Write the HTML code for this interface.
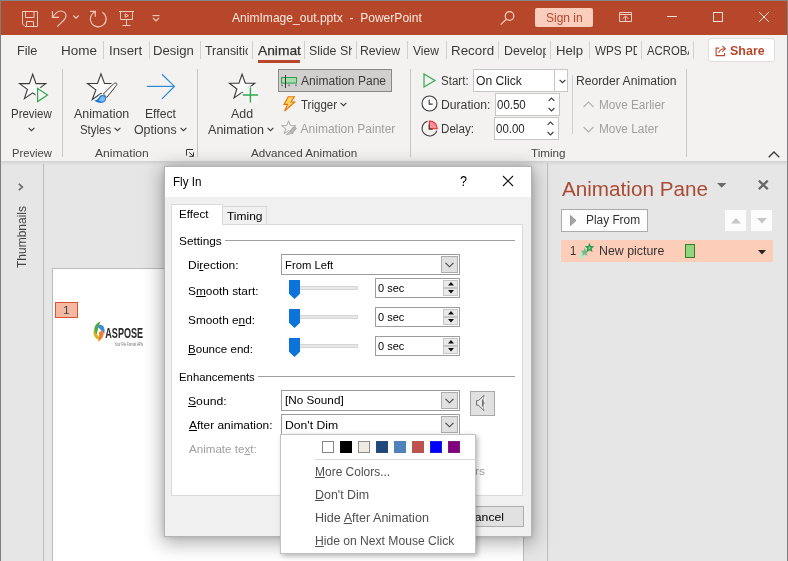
<!DOCTYPE html>
<html><head><meta charset="utf-8">
<style>
*{box-sizing:border-box;margin:0;padding:0}
html,body{width:788px;height:561px;overflow:hidden;background:#e6e6e6;font-family:"Liberation Sans",sans-serif;font-size:12px;color:#333}
.a{position:absolute}
.layer{position:absolute;left:0;top:0;width:788px;height:561px;overflow:hidden}
.tx{position:absolute;white-space:pre;transform-origin:0 0;line-height:normal}
.tx u{text-decoration:underline;text-underline-offset:1px}
svg{position:absolute;overflow:visible}
#title{left:0;top:0;width:788px;height:35px;background:#b7472a}
#tabs{left:0;top:35px;width:788px;height:30px;background:#f3f2f1}
#ribbon{left:0;top:65px;width:788px;height:96px;background:#f3f2f1}
.sep{position:absolute;width:1px;background:#d2d0ce}
.vsep{position:absolute;width:1px;background:#c8c6c4}
.clip{position:absolute;overflow:hidden;height:20px}
.clip .tx{left:0;top:0}
</style></head><body>
<!-- ================= BASE ================= -->
<div class="layer" id="base" style="will-change:transform">
 <div class="a" id="title"></div>
 <div class="a" id="tabs"></div>
 <div class="a" id="ribbon"></div>

 <!-- title icons -->
 <svg style="left:22px;top:11px" width="16" height="16" viewBox="0 0 16 16" fill="none" stroke="#f6cdbf" stroke-width="1">
  <path d="M0.5 0.5 H15.5 V15.5 H3 L0.5 13 Z"/><path d="M3.5 0.5 V6.5 H12 V0.5"/><path d="M4.5 15.5 V10.5 H11.5 V15.5"/>
 </svg>
 <svg style="left:51px;top:10px" width="17" height="18" viewBox="0 0 17 18" fill="none" stroke="#f6cdbf" stroke-width="1.1">
  <path d="M1.4 1 V7.4 H8"/><path d="M1.6 7.2 C4 3.5 6.5 1 9.8 1 C12.8 1 15 3.2 15 5.8 C15 7.5 14.2 8.8 13 10 L6.2 16.6"/>
 </svg>
 <svg style="left:73px;top:15px" width="6" height="4" viewBox="0 0 6 4" fill="none" stroke="#f6cdbf" stroke-width="1.1"><path d="M0.3 0.5 L3 3.2 L5.7 0.5"/></svg>
 <svg style="left:89px;top:10px" width="18" height="18" viewBox="0 0 18 18" fill="none" stroke="#f6cdbf" stroke-width="1.1">
  <path d="M13.4 2.3 A7.9 7.9 0 1 1 6.2 1.7"/><path d="M1 1.4 H6.3 V6.7"/>
 </svg>
 <svg style="left:119px;top:11px" width="15" height="16" viewBox="0 0 15 16" fill="none" stroke="#f6cdbf" stroke-width="1">
  <path d="M0 0.5 H15"/><path d="M1.5 0.5 V8.5 H13.5 V0.5"/><path d="M7.5 8.5 V14.5"/><path d="M3.5 14.5 H11.5"/><path d="M6.2 2.8 L9.4 4.6 L6.2 6.4 Z"/>
 </svg>
 <svg style="left:152px;top:15px" width="8" height="7" viewBox="0 0 8 7" fill="none" stroke="#f6cdbf" stroke-width="1.1"><path d="M0.5 0.6 H7.5"/><path d="M1 3 L4 6 L7 3"/></svg>
 <svg style="left:500px;top:11px" width="15" height="14" viewBox="0 0 15 14" fill="none" stroke="#f6cdbf" stroke-width="1.2">
  <circle cx="9.5" cy="5" r="4.3"/><path d="M6.3 8.3 L0.7 13.6"/>
 </svg>
 <div class="a" style="left:535px;top:8px;width:58px;height:19px;background:#fbcdbd;border-radius:2px"></div>
 <svg style="left:619px;top:12px" width="13" height="10" viewBox="0 0 13 10" fill="none" stroke="#f6cdbf" stroke-width="1">
  <path d="M0.5 0.5 H12.5 V9.5 H0.5 Z"/><path d="M0.5 2.5 H12.5"/><path d="M6.5 9.5 V4.2"/><path d="M3.6 6.8 L6.5 4 L9.4 6.8"/>
 </svg>
 <div class="a" style="left:667px;top:16px;width:10px;height:1px;background:#f9dcd2"></div>
 <div class="a" style="left:713px;top:12px;width:10px;height:10px;border:1px solid #f9dcd2"></div>
 <svg style="left:759px;top:12px" width="10" height="10" viewBox="0 0 10 10" fill="none" stroke="#f9dcd2" stroke-width="1"><path d="M0 0 L10 10 M10 0 L0 10"/></svg>

 <!-- tabs -->
 <div class="sep" style="left:103px;top:41px;height:18px"></div>
 <div class="sep" style="left:149px;top:41px;height:18px"></div>
 <div class="sep" style="left:200px;top:41px;height:18px"></div>
 <div class="sep" style="left:252px;top:41px;height:18px"></div>
 <div class="sep" style="left:304px;top:41px;height:18px"></div>
 <div class="sep" style="left:356px;top:41px;height:18px"></div>
 <div class="sep" style="left:407px;top:41px;height:18px"></div>
 <div class="sep" style="left:446px;top:41px;height:18px"></div>
 <div class="sep" style="left:498px;top:41px;height:18px"></div>
 <div class="sep" style="left:550px;top:41px;height:18px"></div>
 <div class="sep" style="left:589px;top:41px;height:18px"></div>
 <div class="sep" style="left:641px;top:41px;height:18px"></div>
 <div class="sep" style="left:693px;top:41px;height:18px"></div>
 <div class="clip" style="left:205.4px;top:43px;width:42.4px"><span class="tx" style="font-size:13px;color:#3b3a39;transform:scaleX(.95)">Transitions</span></div>
 <div class="clip" style="left:257.5px;top:43px;width:43px"><span class="tx" style="font-size:13px;color:#323130;-webkit-text-stroke:0.25px #323130;transform:scaleX(1.06)">Animations</span></div>
 <div class="clip" style="left:309px;top:43px;width:42.6px"><span class="tx" style="font-size:13px;color:#3b3a39;transform:scaleX(.95)">Slide Show</span></div>
 <div class="clip" style="left:503.7px;top:43px;width:42.3px"><span class="tx" style="font-size:13px;color:#3b3a39;transform:scaleX(.95)">Developer</span></div>
 <div class="clip" style="left:594.8px;top:43px;width:42.3px"><span class="tx" style="font-size:13px;color:#3b3a39;transform:scaleX(.90)">WPS PDF</span></div>
 <div class="clip" style="left:646.5px;top:43px;width:42.3px"><span class="tx" style="font-size:13px;color:#3b3a39;transform:scaleX(.872)">ACROBAT</span></div>
 <div class="a" style="left:258px;top:60px;width:42px;height:3px;background:#b7472a"></div>
 <div class="a" style="left:708px;top:38px;width:67px;height:24px;background:#fff;border:1px solid #e1dfdd;border-radius:3px"></div>
 <svg style="left:715px;top:44.5px" width="12" height="11.5" viewBox="0 0 13 13" fill="none" stroke="#b7472a" stroke-width="1.25">
  <path d="M4.5 3.5 H1 V12 H10.5 V9"/><path d="M3.8 9 C4.5 5.8 6.5 4.2 10.5 4.2"/><path d="M8 1 L11.5 4.2 L8 7.4"/>
 </svg>

 <!-- ribbon -->
 <div class="vsep" style="left:62px;top:69px;height:88px"></div>
 <div class="vsep" style="left:197px;top:69px;height:88px"></div>
 <div class="vsep" style="left:410px;top:69px;height:88px"></div>
 <div class="vsep" style="left:572px;top:75px;height:59px;background:#d2d0ce"></div>
 <div class="vsep" style="left:686px;top:69px;height:88px"></div>
 <!-- Preview star -->
 <svg style="left:17.5px;top:73px" width="32" height="30" viewBox="0 0 32 30" fill="none">
  <path d="M14.7 1.2 L18 10.6 H27.8 L20 16.4 L23 25.6 L14.7 19.8 L6.4 25.6 L9.4 16.4 L1.6 10.6 H11.4 Z" stroke="#3b3a39" stroke-width="1.1" fill="#fafafa"/>
  <path d="M19.6 15.4 L29.6 22 L19.6 28.6 Z" stroke="#f6f5f4" stroke-width="4" fill="#f6f5f4"/><path d="M19.6 15.4 L29.6 22 L19.6 28.6 Z" stroke="#2fa84f" stroke-width="1.2" fill="#f6f5f4"/>
 </svg>
 <svg style="left:28px;top:127px" width="7" height="5" viewBox="0 0 7 5" fill="none" stroke="#3b3a39" stroke-width="1.1"><path d="M0.6 0.8 L3.5 3.7 L6.4 0.8"/></svg>
 <!-- Animation styles star -->
 <svg style="left:86px;top:73px" width="32" height="31" viewBox="0 0 32 31" fill="none">
  <path d="M15 0.9 L18.5 10.5 H28.6 L20.1 16.9 L23.7 26.5 L15 20.4 L6.3 26.5 L9.9 16.9 L1.5 10.5 H11.5 Z" stroke="#3b3a39" stroke-width="1.1" fill="#fafafa"/>
  <path d="M30.6 10.3 C30 9.6 28.6 10 27.6 10.8 L17.6 21.2 L20.6 24.2 L29.6 13.4 C30.6 12.2 31.2 11 30.6 10.3 Z" stroke="#f6f5f4" stroke-width="3.4" fill="#f6f5f4"/>
  <path d="M13 22 L22 19 L25 28 L12 30 Z" fill="#f4f3f2"/>
  <path d="M30.6 10.3 C30 9.6 28.6 10 27.6 10.8 L17.4 21 L20.8 24.4 L29.6 13.4 C30.6 12.2 31.2 11 30.6 10.3 Z" stroke="#3b3a39" stroke-width="1" fill="#fbfbfb"/>
  <path d="M8.3 27.4 C11 27.4 12.4 25.6 13.4 23.8 C14.6 21.8 17.4 21.4 19 23 C20.8 24.8 20.4 27.6 18.2 29 C15.4 30.6 11 30 8.3 27.4 Z" fill="#1f7ad6"/>
  <path d="M12.6 27.6 C13.8 26.8 14 25 15 24 C16.2 22.8 18 23 18.8 24.2 C19.6 25.6 19 27.4 17.4 28.2 C15.8 29 14 28.6 12.6 27.6 Z" fill="#7fbaee"/>
 </svg>
 <svg style="left:114px;top:127px" width="7" height="5" viewBox="0 0 7 5" fill="none" stroke="#3b3a39" stroke-width="1.1"><path d="M0.6 0.8 L3.5 3.7 L6.4 0.8"/></svg>
 <!-- Effect options arrow -->
 <svg style="left:146px;top:73px" width="30" height="28" viewBox="0 0 30 28" fill="none" stroke="#2b88d8" stroke-width="1.2">
  <path d="M0.8 13.4 H28.2"/><path d="M16 1.2 L28.4 13.4 L16 25.8"/>
 </svg>
 <svg style="left:179.5px;top:127px" width="7" height="5" viewBox="0 0 7 5" fill="none" stroke="#3b3a39" stroke-width="1.1"><path d="M0.6 0.8 L3.5 3.7 L6.4 0.8"/></svg>
 <!-- dialog launcher -->
 <svg style="left:186px;top:149px" width="9" height="9" viewBox="0 0 9 9" fill="none" stroke="#3b3a39" stroke-width="1"><path d="M0.5 6.6 V0.5 H7"/><path d="M3.2 3.4 L7.2 7"/><path d="M7.5 3.4 V7.4 H3.4"/></svg>
 <!-- Add animation star -->
 <svg style="left:228px;top:73px" width="32" height="31" viewBox="0 0 32 31" fill="none">
  <path d="M14.1 1.2 L17.3 10.2 H26.8 L19.3 16 L22.2 25 L14.1 19.4 L6 25 L8.9 16 L1.4 10.2 H10.9 Z" stroke="#3b3a39" stroke-width="1.1" fill="#fafafa"/>
  <path d="M22.4 13.4 V30 M13.4 22 H31" stroke="#f6f5f4" stroke-width="4.4"/><rect x="18.6" y="15" width="12" height="15" fill="#f6f5f4"/><path d="M22.4 14.4 V29.6 M14.8 22 H30" stroke="#2fa84f" stroke-width="1.4"/>
 </svg>
 <svg style="left:267px;top:127px" width="7" height="5" viewBox="0 0 7 5" fill="none" stroke="#3b3a39" stroke-width="1.1"><path d="M0.6 0.8 L3.5 3.7 L6.4 0.8"/></svg>
 <!-- animation pane button -->
 <div class="a" style="left:278px;top:69px;width:114px;height:23px;background:#d2d0ce;border:1px solid #8a8886"></div>
 <svg style="left:281px;top:75px" width="17" height="13" viewBox="0 0 17 13" fill="none">
  <rect x="0.5" y="2.5" width="15" height="5.6" fill="#a6dcae" stroke="#2f9e4e" stroke-width="1"/>
  <path d="M4.5 0 V13" stroke="#3b3a39" stroke-width="1"/>
  <path d="M1 9.6 V11.2 M8 9.6 V11.2 M15 9.6 V11.2" stroke="#3b3a39" stroke-width="1"/>
 </svg>
 <!-- trigger bolt -->
 <svg style="left:283px;top:96px" width="13" height="16" viewBox="0 0 13 16" fill="#fcd462" stroke="#e8730c" stroke-width="1.1" stroke-linejoin="miter">
  <path d="M5.2 0.7 H11.4 L8 6 H11.8 L1.6 15.2 L4.4 8.4 H1 Z"/>
 </svg>
 <svg style="left:339.5px;top:102px" width="7" height="5" viewBox="0 0 7 5" fill="none" stroke="#3b3a39" stroke-width="1.1"><path d="M0.6 0.8 L3.5 3.7 L6.4 0.8"/></svg>
 <!-- animation painter (disabled) -->
 <svg style="left:281px;top:120px" width="17" height="16" viewBox="0 0 17 16" fill="none" stroke="#aeaba8" stroke-width="1">
  <path d="M7.6 0.8 L9.4 5.6 H14.8 L10.6 8.8 L12 13.6 L7.6 10.6 L3.2 13.6 L4.8 8.8 L0.6 5.6 H5.8 Z"/>
  <path d="M15.4 8.2 L11.4 13.2 L8.8 11 L13.4 6.6 Z" fill="#b9b6b3" stroke="#a8a5a2"/>
  <path d="M8.8 11.2 L5.6 14.8 L10.6 13.4 Z" fill="#c8c6c4" stroke="#b3b0ad"/>
 </svg>
 <!-- timing -->
 <svg style="left:423px;top:73px" width="13" height="15" viewBox="0 0 13 15" fill="none" stroke="#2fa84f" stroke-width="1.2"><path d="M1 0.9 L12 7.4 L1 13.9 Z"/></svg>
 <div class="a" style="left:473px;top:69px;width:95px;height:23px;background:#fff;border:1px solid #c8c6c4"></div>
 <div class="a" style="left:554px;top:70px;width:1px;height:21px;background:#c8c6c4"></div>
 <svg style="left:558.5px;top:79px" width="7" height="5" viewBox="0 0 7 5" fill="none" stroke="#3b3a39" stroke-width="1.2"><path d="M0.6 0.8 L3.5 3.7 L6.4 0.8"/></svg>
 <svg style="left:421px;top:95.1px" width="17" height="17" viewBox="0 0 17 17" fill="none" stroke="#3b3a39" stroke-width="1.1"><circle cx="8.5" cy="8.5" r="7.5" fill="#fafafa"/><path d="M8.2 4.6 V9.1 H11.7"/></svg>
 <div class="a" style="left:495px;top:93px;width:65px;height:23px;background:#fff;border:1px solid #c8c6c4"></div>
 <svg style="left:547.5px;top:97px" width="7" height="15" viewBox="0 0 7 15" fill="none" stroke="#3b3a39" stroke-width="1.1"><path d="M0.6 3.9 L3.5 1 L6.4 3.9"/><path d="M0.6 11 L3.5 13.9 L6.4 11"/></svg>
 <svg style="left:421px;top:119.5px" width="18" height="17" viewBox="0 0 18 17" fill="none" stroke="#3b3a39" stroke-width="1.1">
  <path d="M8.4 8.8 V1 A7.6 7.6 0 0 1 16.2 8.8 Z" fill="#ff8f99" stroke="#e5262c" stroke-width="1.1"/>
  <path d="M6.6 1.2 A7.5 7.5 0 1 0 15.8 10.6"/><path d="M8.2 4.6 V9.1 H11.7"/>
 </svg>
 <div class="a" style="left:494px;top:117px;width:65px;height:23px;background:#fff;border:1px solid #c8c6c4"></div>
 <svg style="left:546.5px;top:121px" width="7" height="15" viewBox="0 0 7 15" fill="none" stroke="#3b3a39" stroke-width="1.1"><path d="M0.6 3.9 L3.5 1 L6.4 3.9"/><path d="M0.6 11 L3.5 13.9 L6.4 11"/></svg>
 <!-- reorder chevrons -->
 <svg style="left:583px;top:101px" width="11" height="7" viewBox="0 0 11 7" fill="none" stroke="#b3b0ad" stroke-width="1.1"><path d="M0.5 6 L5.5 1 L10.5 6"/></svg>
 <svg style="left:583px;top:125.5px" width="11" height="7" viewBox="0 0 11 7" fill="none" stroke="#b3b0ad" stroke-width="1.1"><path d="M0.5 1 L5.5 6 L10.5 1"/></svg>
 <svg style="left:768px;top:151px" width="12" height="7" viewBox="0 0 12 7" fill="none" stroke="#3b3a39" stroke-width="1.3"><path d="M0.7 6.3 L6 1 L11.3 6.3"/></svg>

 <!-- workspace -->
 <div class="a" style="left:0;top:161px;width:788px;height:5px;background:linear-gradient(#cfcfcf,#dddddd 40%,#e6e6e6)"></div>
 <div class="a" style="left:43px;top:164px;width:1px;height:397px;background:#bdbdbd"></div>
 <svg style="left:18px;top:183px" width="6" height="8" viewBox="0 0 6 8" fill="none" stroke="#666" stroke-width="1.6"><path d="M0.8 0.8 L4.4 4 L0.8 7.2"/></svg>
 <div class="a" style="left:14.5px;top:267.5px;width:62px;height:15px;transform-origin:0 0;transform:rotate(-90deg);font-size:12px;color:#444;white-space:pre;line-height:15px"><span style="display:inline-block;transform-origin:0 0;transform:scaleX(1.0)">Thumbnails</span></div>
 <!-- slide -->
 <div class="a" style="left:52px;top:268px;width:472px;height:300px;background:#fff;border:1px solid #bcbcbc"></div>
 <div class="a" style="left:55px;top:302px;width:23px;height:16px;background:#f4b9a3;border:1px solid #d8532f"></div>
 <!-- aspose logo -->
 <svg style="left:93px;top:321px" width="52" height="27" viewBox="0 0 52 27">
  <path d="M 7.40 0.80 C 3.30 1.80 0.80 6.00 1.40 10.00 C 1.70 11.80 2.40 13.20 3.60 14.00 C 4.40 10.50 5.40 5.50 7.40 0.80 Z" fill="#52a83c"/>
  <path d="M 4.20 5.20 C 6.50 3.00 9.80 3.40 11.00 6.40 C 11.80 8.40 11.80 10.60 11.20 12.80 C 9.20 10.50 7.00 8.00 4.20 5.20 Z" fill="#3b8fd4"/>
  <path d="M 0.40 9.20 C 0.20 13.80 2.00 17.40 5.00 18.60 C 6.20 19.00 7.20 18.60 7.80 17.60 C 5.20 15.40 3.40 12.40 0.40 9.20 Z" fill="#d3b51c"/>
  <path d="M 9.80 9.60 C 11.60 13.00 10.40 17.40 5.00 20.80 C 6.40 17.40 6.40 14.00 5.80 11.60 C 7.20 10.40 8.60 9.90 9.80 9.60 Z" fill="#f17e2c"/>
  <text x="12.3" y="17.4" font-family="Liberation Sans, sans-serif" font-weight="bold" font-size="15.5" fill="#2b2b2b" textLength="37.8" lengthAdjust="spacingAndGlyphs">ASPOSE</text>
  <text x="21.6" y="25.3" font-family="Liberation Sans, sans-serif" font-size="5" fill="#6e6e6e" textLength="28.5" lengthAdjust="spacingAndGlyphs">Your File Format APIs</text>
 </svg>
 <!-- animation pane -->
 <div class="a" style="left:547px;top:163px;width:1px;height:398px;background:#bdbdbd"></div>
 <div class="clip" style="left:561.8px;top:176.6px;width:145.6px;height:30px"><span class="tx" style="font-size:20.5px;color:#ab4a33;transform:scaleX(1.008)">Animation Pane</span></div>
 <svg style="left:716.5px;top:183px" width="10" height="5" viewBox="0 0 10 5"><path d="M0 0 H9.4 L4.7 4.7 Z" fill="#6a6a6a"/></svg>
 <svg style="left:757.7px;top:180.3px" width="10.6" height="9.6" viewBox="0 0 10 9" fill="none" stroke="#686868" stroke-width="2.1"><path d="M0.8 0.6 L9.2 8.6 M9.2 0.6 L0.8 8.6"/></svg>
 <div class="a" style="left:561px;top:209px;width:87px;height:23px;background:#fdfdfd;border:1px solid #ababab"></div>
 <svg style="left:570px;top:215px" width="7" height="11" viewBox="0 0 7 11"><path d="M0.5 0.4 L6 5.5 L0.5 10.6 Z" fill="#a6a6a6" stroke="#8c8c8c" stroke-width=".8"/></svg>
 <div class="a" style="left:725px;top:210px;width:21px;height:21px;background:#fcfcfc"></div>
 <div class="a" style="left:751px;top:210px;width:21px;height:21px;background:#fcfcfc"></div>
 <svg style="left:730.5px;top:217.5px" width="10" height="6" viewBox="0 0 10 6"><path d="M5 0 L10 5.6 H0 Z" fill="#c6c6c6"/></svg>
 <svg style="left:756.5px;top:217.5px" width="10" height="6" viewBox="0 0 10 6"><path d="M0 0 H10 L5 5.6 Z" fill="#c6c6c6"/></svg>
 <div class="a" style="left:561px;top:240px;width:212px;height:22px;background:#fccdb9"></div>
 <svg style="left:576px;top:240px" width="20" height="22" viewBox="0 0 20 22" fill="none">
  <path d="M6.00 11.20 L7.14 14.24 L10.37 14.38 L7.84 16.40 L8.70 19.52 L6.00 17.73 L3.30 19.52 L4.16 16.40 L1.63 14.38 L4.86 14.24 Z" fill="#bfe8cb"/>
  <path d="M8.80 7.60 L9.94 10.64 L13.17 10.78 L10.64 12.80 L11.50 15.92 L8.80 14.13 L6.10 15.92 L6.96 12.80 L4.43 10.78 L7.66 10.64 Z" fill="#6fbb88"/>
  <path d="M13.50 2.90 L14.85 6.04 L18.26 6.35 L15.69 8.61 L16.44 11.95 L13.50 10.20 L10.56 11.95 L11.31 8.61 L8.74 6.35 L12.15 6.04 Z" fill="#1f9a49"/>
  <path d="M13.50 6.30 L14.03 7.37 L15.21 7.54 L14.36 8.38 L14.56 9.56 L13.50 9.00 L12.44 9.56 L12.64 8.38 L11.79 7.54 L12.97 7.37 Z" fill="#7fd09a"/>
 </svg>
 <div class="a" style="left:685px;top:244px;width:10px;height:14px;background:#92d67c;border:1px solid #3d7a2e"></div>
 <svg style="left:757.5px;top:250px" width="8" height="5" viewBox="0 0 8 5"><path d="M0 0 H8 L4 4.4 Z" fill="#222"/></svg>

 <!-- window border -->
 <div class="a" style="left:0;top:0;width:788px;height:1px;background:#7f8a86"></div>
 <div class="a" style="left:0;top:0;width:1px;height:561px;background:#7f7f7f"></div>
 <div class="a" style="left:787px;top:0;width:1px;height:561px;background:#7f7f7f"></div>
<span class="tx" style="left:232.3px;top:10.0px;font-size:13px;color:#fde9e1;font-weight:normal;transform:scaleX(0.9284);">AnimImage_out.pptx  -  PowerPoint</span>
<span class="tx" style="left:545.6px;top:10.0px;font-size:13px;color:#b7472a;font-weight:normal;transform:scaleX(0.9237);">Sign in</span>
<span class="tx" style="left:17.3px;top:43.0px;font-size:13px;color:#3b3a39;font-weight:normal;transform:scaleX(0.9737);">File</span>
<span class="tx" style="left:61.4px;top:43.0px;font-size:13px;color:#3b3a39;font-weight:normal;transform:scaleX(1.0394);">Home</span>
<span class="tx" style="left:109.0px;top:43.0px;font-size:13px;color:#3b3a39;font-weight:normal;transform:scaleX(1.0194);">Insert</span>
<span class="tx" style="left:153.3px;top:43.0px;font-size:13px;color:#3b3a39;font-weight:normal;transform:scaleX(1.0103);">Design</span>
<span class="tx" style="left:360.4px;top:43.0px;font-size:13px;color:#3b3a39;font-weight:normal;transform:scaleX(0.9381);">Review</span>
<span class="tx" style="left:413.4px;top:43.0px;font-size:13px;color:#3b3a39;font-weight:normal;transform:scaleX(0.9286);">View</span>
<span class="tx" style="left:450.6px;top:43.0px;font-size:13px;color:#3b3a39;font-weight:normal;transform:scaleX(1.0275);">Record</span>
<span class="tx" style="left:555.8px;top:43.0px;font-size:13px;color:#3b3a39;font-weight:normal;transform:scaleX(1.0120);">Help</span>
<span class="tx" style="left:730.0px;top:43.0px;font-size:13px;color:#b7472a;font-weight:bold;transform:scaleX(0.9600);">Share</span>
<span class="tx" style="left:10.6px;top:107.0px;font-size:12px;color:#3b3a39;font-weight:normal;transform:scaleX(0.9548);">Preview</span>
<span class="tx" style="left:11.5px;top:147.0px;font-size:11px;color:#484644;font-weight:normal;transform:scaleX(1.0184);">Preview</span>
<span class="tx" style="left:73.5px;top:107.0px;font-size:12px;color:#3b3a39;font-weight:normal;transform:scaleX(1.0358);">Animation</span>
<span class="tx" style="left:80.1px;top:123.0px;font-size:12px;color:#3b3a39;font-weight:normal;transform:scaleX(0.9516);">Styles</span>
<span class="tx" style="left:145.4px;top:107.0px;font-size:12px;color:#3b3a39;font-weight:normal;transform:scaleX(1.0138);">Effect</span>
<span class="tx" style="left:133.6px;top:123.0px;font-size:12px;color:#3b3a39;font-weight:normal;transform:scaleX(1.0300);">Options</span>
<span class="tx" style="left:94.9px;top:147.0px;font-size:11px;color:#484644;font-weight:normal;transform:scaleX(1.1000);">Animation</span>
<span class="tx" style="left:231.3px;top:107.0px;font-size:12px;color:#3b3a39;font-weight:normal;transform:scaleX(1.0333);">Add</span>
<span class="tx" style="left:208.3px;top:123.0px;font-size:12px;color:#3b3a39;font-weight:normal;transform:scaleX(1.0472);">Animation</span>
<span class="tx" style="left:300.6px;top:74.0px;font-size:12px;color:#3b3a39;font-weight:normal;transform:scaleX(1.0036);">Animation Pane</span>
<span class="tx" style="left:300.6px;top:98.0px;font-size:12px;color:#3b3a39;font-weight:normal;transform:scaleX(0.9595);">Trigger</span>
<span class="tx" style="left:300.6px;top:122.0px;font-size:12px;color:#a19f9d;font-weight:normal;transform:scaleX(1.0000);">Animation Painter</span>
<span class="tx" style="left:250.8px;top:147.0px;font-size:11px;color:#484644;font-weight:normal;transform:scaleX(1.0580);">Advanced Animation</span>
<span class="tx" style="left:440.5px;top:74.0px;font-size:12px;color:#3b3a39;font-weight:normal;transform:scaleX(0.9630);">Start:</span>
<span class="tx" style="left:475.6px;top:74.0px;font-size:12px;color:#201f1e;font-weight:normal;transform:scaleX(1.0091);">On Click</span>
<span class="tx" style="left:440.5px;top:98.0px;font-size:12px;color:#3b3a39;font-weight:normal;transform:scaleX(1.0149);">Duration:</span>
<span class="tx" style="left:497.3px;top:98.0px;font-size:12px;color:#201f1e;font-weight:normal;transform:scaleX(0.9571);">00.50</span>
<span class="tx" style="left:440.5px;top:122.0px;font-size:12px;color:#3b3a39;font-weight:normal;transform:scaleX(0.9688);">Delay:</span>
<span class="tx" style="left:496.3px;top:122.0px;font-size:12px;color:#201f1e;font-weight:normal;transform:scaleX(0.9571);">00.00</span>
<span class="tx" style="left:531.4px;top:147.0px;font-size:11px;color:#484644;font-weight:normal;transform:scaleX(1.0594);">Timing</span>
<span class="tx" style="left:576.4px;top:74.0px;font-size:12px;color:#3b3a39;font-weight:normal;transform:scaleX(1.0122);">Reorder Animation</span>
<span class="tx" style="left:598.6px;top:98.0px;font-size:12px;color:#a19f9d;font-weight:normal;transform:scaleX(0.9788);">Move Earlier</span>
<span class="tx" style="left:598.6px;top:122.0px;font-size:12px;color:#a19f9d;font-weight:normal;transform:scaleX(0.9864);">Move Later</span>
<span class="tx" style="left:63.1px;top:304.0px;font-size:11px;color:#444;font-weight:normal;transform:scaleX(1.1000);">1</span>
</div>
<!-- ================= DIALOG ================= -->
<div class="layer" id="dlgl">
 <div class="a" style="left:164px;top:166px;width:368px;height:371px;background:#f0f0f0;border:1px solid #b4b4b4;box-shadow:0 4px 18px 2px rgba(0,0,0,.32), 0 0 5px rgba(0,0,0,.14)"></div>
 <div class="a" style="left:165px;top:167px;width:366px;height:30px;background:#fff"></div>
 <svg style="left:503px;top:176px" width="10" height="10" viewBox="0 0 10 10" fill="none" stroke="#111" stroke-width="1.1"><path d="M0 0 L10 10 M10 0 L0 10"/></svg>
 <!-- tabs -->
 <div class="a" style="left:171px;top:224px;width:352px;height:272px;background:#fff;border:1px solid #dadada"></div>
 <div class="a" style="left:222px;top:206px;width:45px;height:19px;background:#f0f0f0;border:1px solid #d9d9d9"></div>
 <div class="a" style="left:171px;top:204px;width:52px;height:21px;background:#fff;border:1px solid #dadada;border-bottom:none"></div>
 <!-- group lines -->
 <div class="a" style="left:225px;top:240px;width:290px;height:1px;background:#a0a0a0"></div>
 <div class="a" style="left:258px;top:376px;width:257px;height:1px;background:#a0a0a0"></div>
 <div class="a" style="left:281px;top:254px;width:179px;height:21px;background:#fff;border:1px solid #9c9c9c"></div>
 <div class="a" style="left:441px;top:256px;width:17px;height:17px;background:#e1e1e1;border:1px solid #adadad"></div>
 <svg style="left:445px;top:262px" width="9" height="6" viewBox="0 0 9 6" fill="none" stroke="#444" stroke-width="1.1"><path d="M0.5 0.8 L4.5 4.8 L8.5 0.8"/></svg>
 <div class="a" style="left:299px;top:286px;width:59px;height:4px;background:#e7e7e7;border:1px solid #d6d6d6"></div>
 <svg style="left:289px;top:280px" width="11" height="19" viewBox="0 0 11 19"><path d="M0 0 H11 V13.8 L5.5 19 L0 13.8 Z" fill="#0a74da"/></svg>
 <div class="a" style="left:375px;top:278px;width:85px;height:20px;background:#fff;border:1px solid #9c9c9c"></div>
 <div class="a" style="left:443px;top:280px;width:15px;height:8px;background:#e9e9e9;border:1px solid #c6c6c6"></div>
 <div class="a" style="left:443px;top:288px;width:15px;height:8px;background:#e9e9e9;border:1px solid #c6c6c6"></div>
 <svg style="left:447.5px;top:282.4px" width="6" height="3.4" viewBox="0 0 6 3.4"><path d="M3 0 L6 3.4 H0 Z" fill="#111"/></svg>
 <svg style="left:447.5px;top:290.2px" width="6" height="3.4" viewBox="0 0 6 3.4"><path d="M0 0 H6 L3 3.4 Z" fill="#111"/></svg>
 <div class="a" style="left:299px;top:315px;width:59px;height:4px;background:#e7e7e7;border:1px solid #d6d6d6"></div>
 <svg style="left:289px;top:309px" width="11" height="19" viewBox="0 0 11 19"><path d="M0 0 H11 V13.8 L5.5 19 L0 13.8 Z" fill="#0a74da"/></svg>
 <div class="a" style="left:375px;top:307px;width:85px;height:20px;background:#fff;border:1px solid #9c9c9c"></div>
 <div class="a" style="left:443px;top:309px;width:15px;height:8px;background:#e9e9e9;border:1px solid #c6c6c6"></div>
 <div class="a" style="left:443px;top:317px;width:15px;height:8px;background:#e9e9e9;border:1px solid #c6c6c6"></div>
 <svg style="left:447.5px;top:311.4px" width="6" height="3.4" viewBox="0 0 6 3.4"><path d="M3 0 L6 3.4 H0 Z" fill="#111"/></svg>
 <svg style="left:447.5px;top:319.2px" width="6" height="3.4" viewBox="0 0 6 3.4"><path d="M0 0 H6 L3 3.4 Z" fill="#111"/></svg>
 <div class="a" style="left:299px;top:344px;width:59px;height:4px;background:#e7e7e7;border:1px solid #d6d6d6"></div>
 <svg style="left:289px;top:338px" width="11" height="19" viewBox="0 0 11 19"><path d="M0 0 H11 V13.8 L5.5 19 L0 13.8 Z" fill="#0a74da"/></svg>
 <div class="a" style="left:375px;top:336px;width:85px;height:20px;background:#fff;border:1px solid #9c9c9c"></div>
 <div class="a" style="left:443px;top:338px;width:15px;height:8px;background:#e9e9e9;border:1px solid #c6c6c6"></div>
 <div class="a" style="left:443px;top:346px;width:15px;height:8px;background:#e9e9e9;border:1px solid #c6c6c6"></div>
 <svg style="left:447.5px;top:340.4px" width="6" height="3.4" viewBox="0 0 6 3.4"><path d="M3 0 L6 3.4 H0 Z" fill="#111"/></svg>
 <svg style="left:447.5px;top:348.2px" width="6" height="3.4" viewBox="0 0 6 3.4"><path d="M0 0 H6 L3 3.4 Z" fill="#111"/></svg>
 <div class="a" style="left:281px;top:390px;width:179px;height:21px;background:#fff;border:1px solid #9c9c9c"></div>
 <div class="a" style="left:441px;top:392px;width:17px;height:17px;background:#e1e1e1;border:1px solid #adadad"></div>
 <svg style="left:445px;top:398px" width="9" height="6" viewBox="0 0 9 6" fill="none" stroke="#444" stroke-width="1.1"><path d="M0.5 0.8 L4.5 4.8 L8.5 0.8"/></svg>
 <div class="a" style="left:281px;top:414px;width:179px;height:21px;background:#fff;border:1px solid #9c9c9c"></div>
 <div class="a" style="left:441px;top:416px;width:17px;height:17px;background:#e1e1e1;border:1px solid #adadad"></div>
 <svg style="left:445px;top:422px" width="9" height="6" viewBox="0 0 9 6" fill="none" stroke="#444" stroke-width="1.1"><path d="M0.5 0.8 L4.5 4.8 L8.5 0.8"/></svg>
 <div class="a" style="left:470px;top:391px;width:25px;height:25px;background:#e1e1e1;border:1px solid #a8a8a8"></div>
 <svg style="left:470px;top:391px" width="25" height="25" viewBox="0 0 25 25" fill="none">
  <path d="M6.6 9.6 H8.4 L14 4.4 V19.6 L8.4 14.2 H6.6 Z" fill="#ededed" stroke="#6a6a6a" stroke-width="1"/>
  <path d="M14.6 5.5 V18.5" stroke="#fafafa" stroke-width="1"/>
  <path d="M12.4 8.4 V15.6" stroke="#666" stroke-width="1"/>
  <path d="M13 10.6 C14.6 11.2 14.6 13 13 13.6" stroke="#666" stroke-width=".9"/>
 </svg>
 <div class="a" style="left:449px;top:506px;width:75px;height:21px;background:#e1e1e1;border:1px solid #adadad"></div>

<span class="tx" style="left:586.3px;top:213.0px;font-size:12px;color:#333;font-weight:normal;transform:scaleX(0.9887);">Play From</span>
<span class="tx" style="left:570.0px;top:244.0px;font-size:12px;color:#333;font-weight:normal;transform:scaleX(0.9400);">1</span>
<span class="tx" style="left:599.4px;top:244.0px;font-size:12px;color:#333;font-weight:normal;transform:scaleX(1.0306);">New picture</span>
<span class="tx" style="left:172.5px;top:175.0px;font-size:12px;color:#000;font-weight:normal;transform:scaleX(0.9714);">Fly In</span>
<span class="tx" style="left:459.7px;top:173.0px;font-size:14px;color:#000;font-weight:normal;transform:scaleX(0.9000);">?</span>
<span class="tx" style="left:178.6px;top:208.0px;font-size:11.5px;color:#000;font-weight:normal;transform:scaleX(1.0071);">Effect</span>
<span class="tx" style="left:227.3px;top:210.0px;font-size:11.5px;color:#000;font-weight:normal;transform:scaleX(1.0394);">Timing</span>
<span class="tx" style="left:179.4px;top:235.0px;font-size:11.5px;color:#000;font-weight:normal;transform:scaleX(1.0275);">Settings</span>
<span class="tx" style="left:188.3px;top:259.0px;font-size:11.5px;color:#000;font-weight:normal;transform:scaleX(1.0404);">Di<u>r</u>ection:</span>
<span class="tx" style="left:284.7px;top:259.0px;font-size:11.5px;color:#000;font-weight:normal;transform:scaleX(0.9792);">From Left</span>
<span class="tx" style="left:188.3px;top:285.0px;font-size:11.5px;color:#000;font-weight:normal;transform:scaleX(1.0303);">S<u>m</u>ooth start:</span>
<span class="tx" style="left:378.2px;top:282.0px;font-size:11.5px;color:#000;font-weight:normal;transform:scaleX(0.9538);">0 sec</span>
<span class="tx" style="left:188.3px;top:314.0px;font-size:11.5px;color:#000;font-weight:normal;transform:scaleX(1.0270);">Smooth e<u>n</u>d:</span>
<span class="tx" style="left:378.2px;top:311.0px;font-size:11.5px;color:#000;font-weight:normal;transform:scaleX(0.9538);">0 sec</span>
<span class="tx" style="left:188.3px;top:343.0px;font-size:11.5px;color:#000;font-weight:normal;transform:scaleX(1.0063);"><u>B</u>ounce end:</span>
<span class="tx" style="left:378.2px;top:340.0px;font-size:11.5px;color:#000;font-weight:normal;transform:scaleX(0.9538);">0 sec</span>
<span class="tx" style="left:179.4px;top:371.0px;font-size:11.5px;color:#000;font-weight:normal;transform:scaleX(0.9880);">Enhancements</span>
<span class="tx" style="left:188.3px;top:395.0px;font-size:11.5px;color:#000;font-weight:normal;transform:scaleX(1.0588);"><u>S</u>ound:</span>
<span class="tx" style="left:284.7px;top:394.0px;font-size:11.5px;color:#000;font-weight:normal;transform:scaleX(1.0196);">[No Sound]</span>
<span class="tx" style="left:189.4px;top:419.0px;font-size:11.5px;color:#000;font-weight:normal;transform:scaleX(1.0367);"><u>A</u>fter animation:</span>
<span class="tx" style="left:284.6px;top:419.0px;font-size:11.5px;color:#000;font-weight:normal;transform:scaleX(1.0604);">Don't Dim</span>
<span class="tx" style="left:189.3px;top:443.0px;font-size:11.5px;color:#a0a0a0;font-weight:normal;transform:scaleX(1.0076);">Animate te<u>x</u>t:</span>
<span class="tx" style="left:474.9px;top:465.0px;font-size:11.5px;color:#a0a0a0;font-weight:normal;transform:scaleX(1.0625);">rs</span>
<span class="tx" style="left:466.4px;top:511.0px;font-size:11.5px;color:#000;font-weight:normal;transform:scaleX(1.0618);">Cancel</span>
</div>
<!-- ================= POPUP ================= -->
<div class="layer" id="popl">
 <div class="a" style="left:280px;top:434px;width:196px;height:120px;background:#fff;border:1px solid #c2c2c2;box-shadow:2px 2px 5px rgba(0,0,0,.28)"></div>
 <div class="a" style="left:315px;top:459px;width:160px;height:1px;background:#d8d8d8"></div>
 <div class="a" style="left:322px;top:441px;width:12px;height:12px;background:#fff;border:1px solid #868686"></div>
 <div class="a" style="left:340px;top:441px;width:12px;height:12px;background:#000;border:1px solid #000"></div>
 <div class="a" style="left:358px;top:441px;width:12px;height:12px;background:#eeece1;border:1px solid #8c8c8c"></div>
 <div class="a" style="left:376px;top:441px;width:12px;height:12px;background:#1f497d;border:1px solid #2a4a78"></div>
 <div class="a" style="left:394px;top:441px;width:12px;height:12px;background:#4f81bd;border:1px solid #5580b4"></div>
 <div class="a" style="left:412px;top:441px;width:12px;height:12px;background:#c0504d;border:1px solid #b45552"></div>
 <div class="a" style="left:430px;top:441px;width:12px;height:12px;background:#0000ff;border:1px solid #1a1af0"></div>
 <div class="a" style="left:448px;top:441px;width:12px;height:12px;background:#800080;border:1px solid #7a1a7a"></div>

<span class="tx" style="left:315.0px;top:465.0px;font-size:12.5px;color:#505050;font-weight:normal;transform:scaleX(0.9579);"><u>M</u>ore Colors...</span>
<span class="tx" style="left:315.0px;top:488.0px;font-size:12.5px;color:#505050;font-weight:normal;transform:scaleX(0.9943);"><u>D</u>on't Dim</span>
<span class="tx" style="left:315.0px;top:511.0px;font-size:12.5px;color:#505050;font-weight:normal;transform:scaleX(1.0054);">Hide <u>A</u>fter Animation</span>
<span class="tx" style="left:315.0px;top:534.0px;font-size:12.5px;color:#505050;font-weight:normal;transform:scaleX(0.9683);"><u>H</u>ide on Next Mouse Click</span>
</div>
</body></html>
